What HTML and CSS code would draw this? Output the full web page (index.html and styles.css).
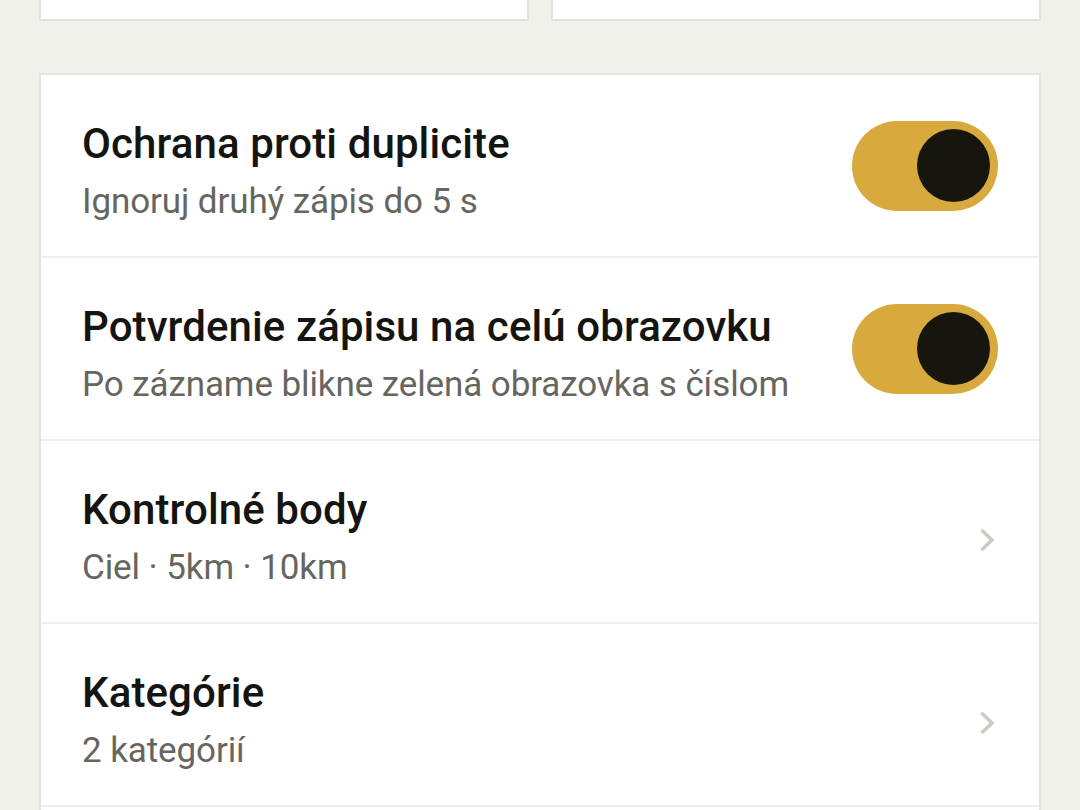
FILE: index.html
```html
<!DOCTYPE html>
<html lang="sk">
<head>
<meta charset="utf-8">
<title>Nastavenia</title>
<link rel="stylesheet" href="styles.css">
</head>
<body>
<div class="page">
  <div class="top-cards">
    <div class="top-card"></div>
    <div class="top-card"></div>
  </div>
  <div class="settings">
    <div class="row">
      <div class="text">
        <div class="title">Ochrana proti duplicite</div>
        <div class="sub">Ignoruj druhý zápis do 5 s</div>
      </div>
      <div class="toggle on"><div class="knob"></div></div>
    </div>
    <div class="row">
      <div class="text">
        <div class="title">Potvrdenie zápisu na celú obrazovku</div>
        <div class="sub">Po zázname blikne zelená obrazovka s číslom</div>
      </div>
      <div class="toggle on"><div class="knob"></div></div>
    </div>
    <div class="row">
      <div class="text">
        <div class="title">Kontrolné body</div>
        <div class="sub">Ciel · 5km · 10km</div>
      </div>
      <svg class="chev" viewBox="0 0 16 24" width="16" height="24"><polyline points="2.5,2 13,12 2.5,22" fill="none" stroke="#cbcbc4" stroke-width="3.5" stroke-linejoin="miter"/></svg>
    </div>
    <div class="row">
      <div class="text">
        <div class="title">Kategórie</div>
        <div class="sub">2 kategórií</div>
      </div>
      <svg class="chev" viewBox="0 0 16 24" width="16" height="24"><polyline points="2.5,2 13,12 2.5,22" fill="none" stroke="#cbcbc4" stroke-width="3.5" stroke-linejoin="miter"/></svg>
    </div>
  </div>
</div>
</body>
</html>
```
FILE: styles.css
```css
html, body {
  margin: 0;
  padding: 0;
  background: #f1f1ec;
  height: 810px;
  overflow: hidden;
}
body {
  font-family: Roboto, "Noto Sans", "Liberation Sans", sans-serif;
  color: #141410;
}
.page {
  padding: 0 39px;
}
.top-cards {
  display: grid;
  grid-template-columns: 1fr 1fr;
  gap: 22px;
}
.top-card {
  height: 19px;
  background: #ffffff;
  border: 2px solid #e3e3dd;
  border-top: none;
}
.settings {
  margin-top: 52px;
  background: #ffffff;
  border: 2px solid #e3e3dd;
  border-bottom: none;
  height: 800px;
}
.row {
  display: flex;
  align-items: center;
  justify-content: space-between;
  height: 183px;
  box-sizing: border-box;
  padding: 0 41px 0 41px;
  border-bottom: 2px solid #efefea;
}
.text {
  display: flex;
  flex-direction: column;
  gap: 14px;
  padding-top: 10px;
}
.title {
  font-size: 42px;
  font-weight: 500;
  line-height: 48px;
  letter-spacing: 0.1px;
  color: #141410;
}
.sub {
  font-size: 35px;
  font-weight: 400;
  line-height: 40px;
  color: #66665f;
  letter-spacing: -0.1px;
}
.toggle {
  width: 146px;
  height: 90px;
  border-radius: 45px;
  background: #d8a93c;
  display: flex;
  align-items: center;
  justify-content: flex-end;
  padding: 0 8px;
  box-sizing: border-box;
  flex-shrink: 0;
}
.knob {
  width: 73px;
  height: 73px;
  border-radius: 50%;
  background: #16160f;
}
.chev {
  margin-right: 3px;
  margin-top: 17px;
}
```
